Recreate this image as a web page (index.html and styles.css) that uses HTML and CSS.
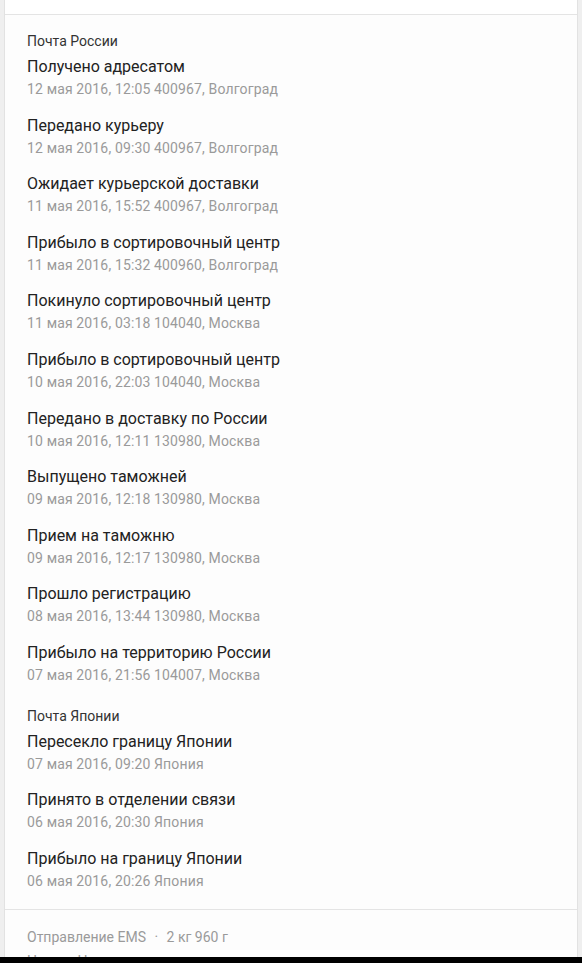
FILE: index.html
```html
<!DOCTYPE html>
<html lang="ru">
<head>
    <meta charset="UTF-8">
    <meta name="viewport" content="width=device-width, initial-scale=1.0">
    <title>Отслеживание отправления</title>
    <link rel="stylesheet" href="styles.css">
</head>
<body>
    <div class="card">
        <div class="card-top"></div>

        <div class="history">
            <div class="group">
                <div class="group-name">Почта России</div>
                <div class="event">
                    <div class="event-title">Получено адресатом</div>
                    <div class="event-info">12 мая 2016, 12:05 400967, Волгоград</div>
                </div>
                <div class="event">
                    <div class="event-title">Передано курьеру</div>
                    <div class="event-info">12 мая 2016, 09:30 400967, Волгоград</div>
                </div>
                <div class="event">
                    <div class="event-title">Ожидает курьерской доставки</div>
                    <div class="event-info">11 мая 2016, 15:52 400967, Волгоград</div>
                </div>
                <div class="event">
                    <div class="event-title">Прибыло в сортировочный центр</div>
                    <div class="event-info">11 мая 2016, 15:32 400960, Волгоград</div>
                </div>
                <div class="event">
                    <div class="event-title">Покинуло сортировочный центр</div>
                    <div class="event-info">11 мая 2016, 03:18 104040, Москва</div>
                </div>
                <div class="event">
                    <div class="event-title">Прибыло в сортировочный центр</div>
                    <div class="event-info">10 мая 2016, 22:03 104040, Москва</div>
                </div>
                <div class="event">
                    <div class="event-title">Передано в доставку по России</div>
                    <div class="event-info">10 мая 2016, 12:11 130980, Москва</div>
                </div>
                <div class="event">
                    <div class="event-title">Выпущено таможней</div>
                    <div class="event-info">09 мая 2016, 12:18 130980, Москва</div>
                </div>
                <div class="event">
                    <div class="event-title">Прием на таможню</div>
                    <div class="event-info">09 мая 2016, 12:17 130980, Москва</div>
                </div>
                <div class="event">
                    <div class="event-title">Прошло регистрацию</div>
                    <div class="event-info">08 мая 2016, 13:44 130980, Москва</div>
                </div>
                <div class="event">
                    <div class="event-title">Прибыло на территорию России</div>
                    <div class="event-info">07 мая 2016, 21:56 104007, Москва</div>
                </div>
            </div>

            <div class="group">
                <div class="group-name">Почта Японии</div>
                <div class="event">
                    <div class="event-title">Пересекло границу Японии</div>
                    <div class="event-info">07 мая 2016, 09:20 Япония</div>
                </div>
                <div class="event">
                    <div class="event-title">Принято в отделении связи</div>
                    <div class="event-info">06 мая 2016, 20:30 Япония</div>
                </div>
                <div class="event">
                    <div class="event-title">Прибыло на границу Японии</div>
                    <div class="event-info">06 мая 2016, 20:26 Япония</div>
                </div>
            </div>
        </div>

        <div class="card-footer">
            <div class="footer-line">Отправление EMS <span class="dot">·</span> 2 кг 960 г</div>
            <div class="footer-line footer-next">Номер: Номер отправления</div>
        </div>
    </div>
    <div class="bottom-bar"></div>
</body>
</html>
```

FILE: styles.css
```css
html, body {
    height: 100%;
    overflow: hidden;
}
body {
    font-family: Roboto, 'Liberation Sans', Arial, sans-serif;
    background-color: #efefef;
    color: #222;
    margin: 0;
    padding: 0;
}
.card {
    margin: 0 4px 0 4px;
    background-color: #fdfdfd;
    border-left: 1px solid #e2e2e2;
    border-right: 1px solid #e2e2e2;
    min-height: 100%;
}
.card-top {
    height: 14px;
    background-color: #fff;
    border-bottom: 1px solid #e4e4e4;
}
.history {
    padding: 16px 22px 3px 22px;
}
.group + .group {
    margin-top: 5px;
}
.group-name {
    font-size: 14px;
    line-height: 20px;
    color: #333;
    margin-bottom: 5px;
}
.event {
    padding-bottom: 14.6px;
}
.event-title {
    font-size: 16px;
    line-height: 22px;
    color: #222;
}
.event-info {
    font-size: 14px;
    line-height: 22px;
    letter-spacing: 0.14px;
    color: #9a9a9a;
}
.card-footer {
    border-top: 1px solid #e4e4e4;
    padding: 16px 22px;
}
.footer-line {
    font-size: 14px;
    line-height: 22px;
    color: #9a9a9a;
}
.footer-next {
    margin-top: 2px;
}
.dot {
    margin: 0 5px;
}
.bottom-bar {
    position: fixed;
    left: 0;
    right: 0;
    bottom: 0;
    height: 6px;
    background-color: #000;
}
```
